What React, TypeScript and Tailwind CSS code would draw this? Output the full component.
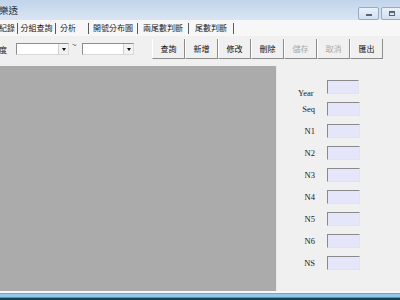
import React from "react";

const cjk = { fontFamily: '"Noto Sans CJK TC", "Noto Sans", sans-serif' };
const serif = { fontFamily: '"Liberation Serif", "DejaVu Serif", serif' };

type ToolButtonProps = {
  label: string;
  disabled?: boolean;
};

function ToolButton({ label, disabled }: ToolButtonProps) {
  return (
    <div
      className={`flex h-[20px] w-[33px] items-center justify-center border-l border-l-white border-r border-r-[#8c8c8c] border-b border-b-[#8c8c8c] text-[8px] ${
        disabled ? "text-[#a8a8a8]" : "text-[#111]"
      }`}
    >
      {label}
    </div>
  );
}

function Combo({ width }: { width: string }) {
  return (
    <div
      className={`flex h-[12px] ${width} items-stretch border border-[#8e8e8e] border-r-[#d8d8d8] border-b-[#d8d8d8] bg-white`}
    >
      <div className="flex-1" />
      <div className="flex w-[10px] items-center justify-center border-l border-[#cfcfcf] bg-[#f2f2f2]">
        <div className="h-0 w-0 border-l-[2.5px] border-r-[2.5px] border-t-[3px] border-l-transparent border-r-transparent border-t-[#111]" />
      </div>
    </div>
  );
}

function Sep() {
  return <div className="h-[11px] w-px bg-[#5a5a5a]" />;
}

const fields = ["Seq", "N1", "N2", "N3", "N4", "N5", "N6", "NS"];

export default function App() {
  return (
    <div
      className="flex h-[300px] w-[400px] flex-col overflow-hidden bg-[#f0f0f0]"
      style={cjk}
    >
      {/* title bar */}
      <div className="flex h-[20px] items-stretch justify-between bg-gradient-to-b from-[#c2d4ea] to-[#d9e5f3]">
        <div className="-ml-[1px] flex items-center text-[9.5px] text-[#1d2a3a]">
          樂透
        </div>
        <div className="-mr-[2px] flex items-end gap-[2px]">
          <div className="flex h-[13px] w-[21px] items-center justify-center rounded-[2px] border border-[#95abc8] bg-gradient-to-b from-[#e9f0f8] to-[#d3e0ef]">
            <div className="mt-[2px] h-[2px] w-[6px] bg-[#55667c]" />
          </div>
          <div className="flex h-[13px] w-[21px] items-center justify-center rounded-[2px] border border-[#95abc8] bg-gradient-to-b from-[#e9f0f8] to-[#d3e0ef]">
            <div className="h-[5px] w-[6px] border border-[#55667c] border-t-2" />
          </div>
        </div>
      </div>

      {/* tabs */}
      <div className="flex h-[16px] items-center bg-[#f7f7f7] text-[8px] text-[#222]">
        <div className="flex w-[15px] justify-end overflow-hidden whitespace-nowrap">紀錄</div>
        <div className="ml-[2px]">
          <Sep />
        </div>
        <div className="w-[37px] text-center">分組查詢</div>
        <Sep />
        <div className="w-[32px] pl-[4px]">分析</div>
        <Sep />
        <div className="w-[48px] text-center">開號分布圖</div>
        <Sep />
        <div className="w-[50px] text-center">兩尾數判斷</div>
        <Sep />
        <div className="w-[44px] text-center">尾數判斷</div>
        <Sep />
      </div>

      {/* toolbar */}
      <div className="flex h-[30px] items-start">
        <div className="-ml-[1px] mt-[8px] w-[17px] text-[8px] text-[#222]">度</div>
        <div className="mt-[7px]">
          <Combo width="w-[53px]" />
        </div>
        <div className="mx-[3px] mt-[5px] w-[7px] text-[8px] leading-none text-[#444]">~</div>
        <div className="mt-[7px]">
          <Combo width="w-[52px]" />
        </div>
        <div className="ml-[18px] mt-[3px] flex">
          <ToolButton label="查詢" />
          <ToolButton label="新增" />
          <ToolButton label="修改" />
          <ToolButton label="刪除" />
          <ToolButton label="儲存" disabled />
          <ToolButton label="取消" disabled />
          <ToolButton label="匯出" />
        </div>
      </div>

      {/* main */}
      <div className="flex flex-1">
        <div className="w-[276px] bg-[#ababab]" />
        <div className="flex flex-1 flex-col gap-[8px] border-l border-[#e8e8e8] pt-[14px]" style={serif}>
          <div className="flex h-[14px]">
            <div className="-mb-[3px] w-[38px] self-end pl-[21px] text-[8.5px] leading-none text-[#1a1a1a]">
              Year
            </div>
            <div className="ml-[12px] h-[14px] w-[32px] border border-[#8a8a8a] border-r-[#e4e4e4] border-b-[#e4e4e4] bg-[#e6e6fa]" />
          </div>
          {fields.map((f) => (
            <div key={f} className="flex h-[14px] items-center">
              <div className="w-[38px] text-right text-[8.5px] leading-none text-[#1a1a1a]">{f}</div>
              <div className="ml-[12px] h-[14px] w-[33px] border border-[#8a8a8a] border-r-[#e4e4e4] border-b-[#e4e4e4] bg-[#e6e6fa]" />
            </div>
          ))}
        </div>
      </div>

      {/* bottom edge */}
      <div className="h-[2px] bg-[#f8f8f8]" />
      <div className="h-px bg-[#9a9a9a]" />
      <div className="h-[3px] bg-[#8fcbe6]" />
      <div className="h-px bg-[#3d9cc9]" />
      <div className="h-[2px] bg-[#1c3f55]" />
    </div>
  );
}
